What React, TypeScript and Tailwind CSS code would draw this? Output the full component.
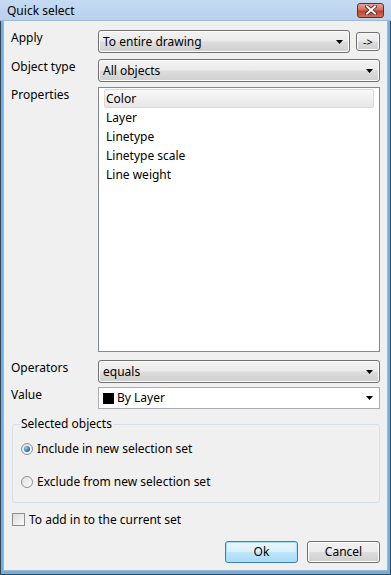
import type { ReactNode } from 'react';

const properties = ['Color', 'Layer', 'Linetype', 'Linetype scale', 'Line weight'];

function Arrow() {
  return (
    <svg width="7" height="4" viewBox="0 0 7 4" className="shrink-0">
      <path d="M0 0 H7 L3.5 4 Z" fill="#000" />
    </svg>
  );
}

function Combo({ children, className = '' }: { children: ReactNode; className?: string }) {
  return (
    <div
      className={`h-[23px] flex items-center justify-between pl-[4px] pr-[6px] rounded-[3px] border border-[#707070] bg-[linear-gradient(#f2f2f2_0%,#ebebeb_48%,#dddddd_52%,#cfcfcf_100%)] shadow-[inset_0_0_0_1px_#fcfcfc] ${className}`}
    >
      <span>{children}</span>
      <Arrow />
    </div>
  );
}

function Row({ label, children, className = '' }: { label: string; children: ReactNode; className?: string }) {
  return (
    <div className={`flex ${className}`}>
      <div className="w-[94px] pl-[7px] pt-[2px] shrink-0">{label}</div>
      <div className="flex-1 min-w-0">{children}</div>
    </div>
  );
}

function Radio({ checked }: { checked?: boolean }) {
  return (
    <span className="w-[12px] h-[12px] rounded-full border border-[#8e8f8f] bg-[linear-gradient(135deg,#e0e0e0,#fbfbfb)] flex items-center justify-center shrink-0">
      {checked && (
        <span className="w-[6px] h-[6px] rounded-full bg-[radial-gradient(circle_at_35%_35%,#8fd0f7,#1767a8_70%,#0d3f6e)]" />
      )}
    </span>
  );
}

export default function App() {
  return (
    <div className="w-[391px] h-[575px] border border-[#34465a] bg-[#6eb0e3] flex flex-col text-[12px] text-black font-['Noto_Sans',sans-serif] leading-none">
      <div className="h-[21px] -mx-px -mt-px px-[7px] flex items-center justify-between bg-[linear-gradient(#c5dbf3,#b9d1ec)] border-b border-[#9fb8d3] shrink-0">
        <span className="pt-[1px]">Quick select</span>
        <div className="w-[27px] h-[15px] rounded-[3px] border border-[#6b2a25] bg-[linear-gradient(#e8a495_0%,#d76c5b_45%,#c23f2d_55%,#d0705a_100%)] flex items-center justify-center">
          <svg width="12" height="10" viewBox="0 0 12 10">
            <path d="M2 1.5 L10 8.5 M10 1.5 L2 8.5" stroke="#4a2320" strokeWidth="3.6" strokeLinecap="square" />
            <path d="M2 1.5 L10 8.5 M10 1.5 L2 8.5" stroke="#fff" strokeWidth="2" strokeLinecap="square" />
          </svg>
        </div>
      </div>

      <div className="flex-1 mx-[2px] mb-[3px] bg-[#f0f0f0] border-l border-r border-b border-[#9fb8d3] flex flex-col pt-[9px] pr-[7px]">
        <Row label="Apply">
          <div className="flex items-start gap-[6px]">
            <Combo className="flex-1">To entire drawing</Combo>
            <div className="mt-[2px] w-[24px] h-[19px] rounded-[3px] border border-[#707070] bg-[linear-gradient(#f2f2f2_0%,#ebebeb_48%,#dddddd_52%,#cfcfcf_100%)] shadow-[inset_0_0_0_1px_#fcfcfc] flex items-center justify-center text-[11px]">
              -&gt;
            </div>
          </div>
        </Row>

        <Row label="Object type" className="mt-[6px]">
          <Combo>All objects</Combo>
        </Row>

        <Row label="Properties" className="mt-[5px]">
          <div className="h-[265px] border border-[#828790] bg-white pt-[1px] px-[5px]">
            {properties.map((p, i) => (
              <div
                key={p}
                className={`h-[19px] flex items-center pl-[1px] rounded-[2px] border ${
                  i === 0
                    ? 'border-[#d9d9d9] bg-[linear-gradient(#fafafa,#e6e6e6)]'
                    : 'border-transparent'
                }`}
              >
                {p}
              </div>
            ))}
          </div>
        </Row>

        <Row label="Operators" className="mt-[8px]">
          <Combo>equals</Combo>
        </Row>

        <Row label="Value" className="mt-[4px]">
          <div className="h-[22px] flex items-center justify-between pl-[4px] pr-[6px] border border-[#abadb3] bg-white">
            <span className="flex items-center gap-[3px]">
              <span className="w-[11px] h-[11px] bg-black" />
              By Layer
            </span>
            <Arrow />
          </div>
        </Row>

        <fieldset className="mt-[9px] ml-[8px] h-[85px] border border-[#d5dfe5] rounded-[3px] px-[8px] pb-0">
          <legend className="px-[1px] ml-[-1px]">Selected objects</legend>
          <label className="flex items-center gap-[4px] mt-[13px]">
            <Radio checked />
            Include in new selection set
          </label>
          <label className="flex items-center gap-[4px] mt-[21px]">
            <Radio />
            Exclude from new selection set
          </label>
        </fieldset>

        <label className="flex items-center gap-[4px] ml-[8px] mt-[10px]">
          <span className="w-[13px] h-[13px] border border-[#8e8f8f] bg-[linear-gradient(135deg,#dcdcdc,#fafafa)] shrink-0" />
          To add in to the current set
        </label>

        <div className="flex justify-end gap-[9px] mt-[15px]">
          <div className="w-[73px] h-[22px] rounded-[3px] border border-[#3c7fb1] bg-[linear-gradient(#eaf6fd_0%,#d9f0fc_48%,#bee6fd_52%,#a7d9f5_100%)] shadow-[inset_0_0_0_1px_#a6e1fb] flex items-center justify-center">
            Ok
          </div>
          <div className="w-[73px] h-[22px] rounded-[3px] border border-[#707070] bg-[linear-gradient(#f2f2f2_0%,#ebebeb_48%,#dddddd_52%,#cfcfcf_100%)] shadow-[inset_0_0_0_1px_#fcfcfc] flex items-center justify-center">
            Cancel
          </div>
        </div>
      </div>
    </div>
  );
}
